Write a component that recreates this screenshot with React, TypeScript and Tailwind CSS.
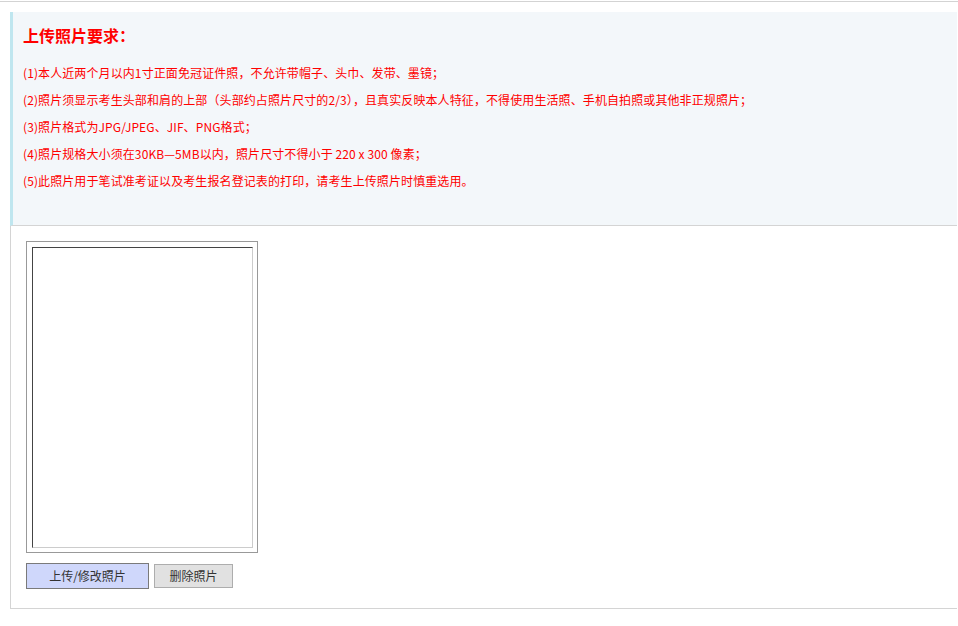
export default function App() {
  const rules = [
    "(1)本人近两个月以内1寸正面免冠证件照，不允许带帽子、头巾、发带、墨镜；",
    "(2)照片须显示考生头部和肩的上部（头部约占照片尺寸的2/3），且真实反映本人特征，不得使用生活照、手机自拍照或其他非正规照片；",
    "(3)照片格式为JPG/JPEG、JIF、PNG格式；",
    "(4)照片规格大小须在30KB—5MB以内，照片尺寸不得小于 220 x 300 像素；",
    "(5)此照片用于笔试准考证以及考生报名登记表的打印，请考生上传照片时慎重选用。",
  ];

  return (
    <div className="min-h-screen bg-white font-['Noto_Sans_CJK_SC','Noto_Sans',sans-serif]">
      <div className="mt-px h-px bg-[#d3d3d3]" />
      <div className="ml-[10px] mt-[10px] mr-px">
        <div className="h-[214px] border-l-[3px] border-b border-l-[#bfe6ef] border-b-[#d4d4d4] bg-[#f3f7fa] pl-[10px] pt-[11px]">
          <h2 className="text-[16px] font-bold leading-[24px] text-[#ff0000]">上传照片要求：</h2>
          <div className="mt-[12px]">
            {rules.map((r) => (
              <p key={r} className="text-[12px] leading-[27px] tracking-[0.1px] text-[#ff0000]">
                {r}
              </p>
            ))}
          </div>
        </div>

        <div className="border-l border-b border-[#d4d4d4] pl-[15px] pt-[15px] pb-[19px]">
          <div className="w-[232px] h-[312px] border border-[#999] pl-[5px] pt-[5px]">
            <div className="w-[221px] h-[301px] border border-t-[#444] border-l-[#444] border-r-[#ccc] border-b-[#ccc] bg-white" />
          </div>
          <div className="mt-[10px] flex items-center gap-[5px]">
            <button className="h-[26px] w-[123px] border border-[#7a7a7a] bg-[#cfd7fb] text-[12px] text-[#333]">
              上传/修改照片
            </button>
            <button className="h-[24px] w-[79px] border border-[#adadad] bg-[#e1e1e1] text-[12px] text-[#333]">
              删除照片
            </button>
          </div>
        </div>
      </div>
    </div>
  );
}
